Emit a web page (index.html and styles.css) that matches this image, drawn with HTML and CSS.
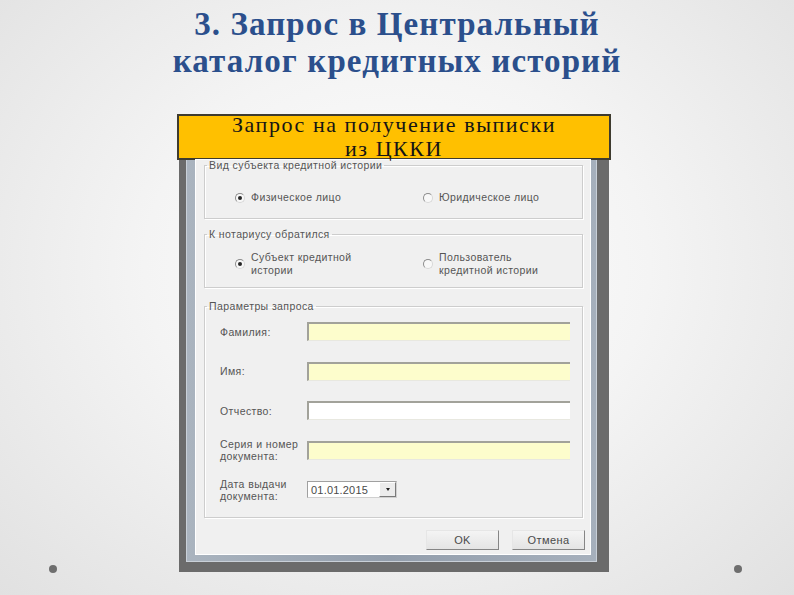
FILE: index.html
```
<!DOCTYPE html>
<html>
<head>
<meta charset="utf-8">
<title>Запрос в ЦККИ</title>
<link rel="stylesheet" href="styles.css">
</head>
<body>
<div class="slide">
  <h1 class="title">3. Запрос в Центральный<br>каталог кредитных историй</h1>
  <div class="stage">
    <div class="gutter gutter-left"><span class="dot"></span></div>
    <div class="figure">
      <div class="banner"><p class="banner-text">Запрос на получение выписки<br>из ЦККИ</p></div>
      <div class="dialog">
        <div class="frame">
          <div class="client">
            <fieldset class="group group-kind">
              <legend>Вид субъекта кредитной истории</legend>
              <div class="choices">
                <div class="choice"><span class="radio on"></span><span>Физическое лицо</span></div>
                <div class="choice"><span class="radio"></span><span>Юридическое лицо</span></div>
              </div>
            </fieldset>
            <fieldset class="group group-who">
              <legend>К нотариусу обратился</legend>
              <div class="choices">
                <div class="choice"><span class="radio on"></span><span>Субъект кредитной<br>истории</span></div>
                <div class="choice"><span class="radio"></span><span>Пользователь<br>кредитной истории</span></div>
              </div>
            </fieldset>
            <fieldset class="group group-params">
              <legend>Параметры запроса</legend>
              <div class="form">
                <span class="label">Фамилия:</span><span class="field"></span>
                <span class="label">Имя:</span><span class="field"></span>
                <span class="label">Отчество:</span><span class="field white"></span>
                <span class="label">Серия и номер<br>документа:</span><span class="field"></span>
                <span class="label">Дата выдачи<br>документа:</span>
                <span class="date"><span class="date-value">01.01.2015</span><span class="date-btn"><span class="arrow"></span></span></span>
              </div>
            </fieldset>
            <div class="buttons">
              <span class="btn">OK</span>
              <span class="btn">Отмена</span>
            </div>
          </div>
        </div>
      </div>
    </div>
    <div class="gutter gutter-right"><span class="dot"></span></div>
  </div>
</div>
</body>
</html>
```
FILE: styles.css
```
html, body {
  margin: 0;
  padding: 0;
}
body {
  width: 794px;
  height: 595px;
  overflow: hidden;
}
.slide {
  width: 794px;
  height: 595px;
  overflow: hidden;
  background: radial-gradient(ellipse at 50% 45%, #fefefe 0%, #f4f4f4 45%, #e1e1e1 100%);
}
.title {
  margin: 6px 0 0;
  font-family: "Liberation Serif", serif;
  font-weight: bold;
  font-size: 33px;
  line-height: 37px;
  letter-spacing: 1.1px;
  color: #2b4f8c;
  text-align: center;
}
.stage {
  display: grid;
  grid-template-columns: 177px 434px 1fr;
  margin-top: 34px;
}
.gutter {
  display: flex;
  align-items: flex-end;
}
.gutter-left { padding-left: 49px; }
.gutter-right { padding-left: 123px; }
.dot {
  display: block;
  width: 8px;
  height: 8px;
  margin-bottom: -1px;
  border-radius: 50%;
  background: #6e6e6e;
}
.banner {
  box-sizing: border-box;
  height: 46px;
  border: 2px solid #3e3b2f;
  background: #ffc000;
  text-align: center;
}
.banner-text {
  margin: -3px 0 0;
  font-family: "Liberation Serif", serif;
  font-size: 22px;
  line-height: 24px;
  letter-spacing: 1.55px;
  color: #151515;
}
.dialog {
  margin: 0 2px;
  background: #6b6b6b;
  padding: 0 12px 10px 7px;
}
.frame {
  background: linear-gradient(90deg, #aab4bf, #939eac 50%, #a6b0bc);
  padding: 0 7px 8px 10px;
  box-shadow: inset 1px 0 0 #c9d0d8, inset -1px 0 0 #c9d0d8, inset 0 -1px 0 #c9d0d8;
}
.client {
  background: #f0f0f0;
  padding: 0 7px 4px 8px;
  box-shadow: 0 0 0 1px #ffffff;
  font-family: "Liberation Sans", Arial, sans-serif;
  font-size: 10.5px;
  letter-spacing: 0.4px;
  color: #555555;
}
.group {
  margin: 0;
  border: 1px solid #cdcdcd;
  box-shadow: inset 1px 1px 0 #ffffff, 1px 1px 0 #ffffff;
  min-inline-size: 0;
}
.group legend {
  margin-left: 2px;
  padding: 0 2px;
  line-height: 11px;
}
.group + .group { margin-top: 10px; }
.group-kind { padding: 20px 0 14px 0; }
.group-who { padding: 11px 0 10px 0; }
.group.group-params { margin-top: 13px; padding: 10px 0 17px 0; }
.choices {
  display: grid;
  grid-template-columns: 188px auto;
  align-items: center;
  padding-left: 30px;
  line-height: 13px;
}
.choice {
  display: flex;
  align-items: center;
  gap: 6px;
}
.radio {
  position: relative;
  flex: none;
  box-sizing: border-box;
  width: 10px;
  height: 10px;
  border-radius: 50%;
  border: 1px solid;
  border-color: #8c8c8c #d8d8d8 #d8d8d8 #8c8c8c;
  background: #f8f8f8;
}
.radio.on::after {
  content: "";
  position: absolute;
  left: 2px;
  top: 2px;
  width: 4px;
  height: 4px;
  border-radius: 50%;
  background: #262626;
}
.form {
  display: grid;
  grid-template-columns: 87px 263px;
  grid-auto-rows: 19.5px;
  row-gap: 20px;
  align-items: center;
  padding-left: 15px;
  line-height: 12px;
}
.field {
  box-sizing: border-box;
  height: 19px;
  border-style: solid;
  border-width: 2px 0 1px 2px;
  border-color: #a2a29a #e8e8e0 #e8e8e0 #a2a29a;
  background: #fdfdcc;
}
.field.white { background: #ffffff; }
.date {
  box-sizing: border-box;
  display: flex;
  align-items: center;
  width: 90px;
  height: 17px;
  border: 1px solid;
  border-color: #a0a0a0 #d0d0d0 #d0d0d0 #a0a0a0;
  background: #ffffff;
}
.date-value {
  flex: 1;
  padding-left: 3px;
  font-size: 11px;
  letter-spacing: 0.2px;
  color: #4a4a4a;
}
.date-btn {
  box-sizing: border-box;
  display: flex;
  align-items: center;
  justify-content: center;
  width: 17px;
  height: 15px;
  border: 1px solid;
  border-color: #ffffff #7a7a7a #7a7a7a #ffffff;
  background: #ececec;
}
.arrow {
  width: 0;
  height: 0;
  border-left: 2px solid transparent;
  border-right: 2px solid transparent;
  border-top: 3px solid #222;
}
.buttons {
  display: flex;
  justify-content: flex-end;
  gap: 13px;
  margin: 12px -2px 0 0;
}
.btn {
  box-sizing: border-box;
  display: flex;
  align-items: center;
  justify-content: center;
  width: 73px;
  height: 20px;
  border: 1px solid;
  border-color: #e6e6e6 #858585 #858585 #e6e6e6;
  background: linear-gradient(#f4f4f4, #e4e4e4);
  font-size: 11px;
  color: #4a4a4a;
}
```
